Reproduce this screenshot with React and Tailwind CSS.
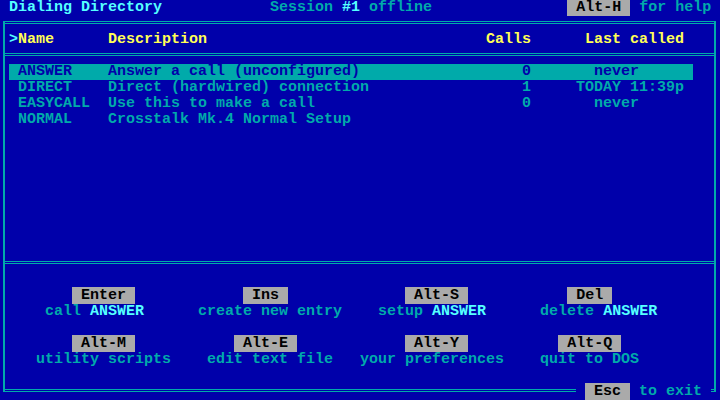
import React from "react";

const sp = (n) => " ".repeat(n);

function entry(name, desc, calls, last, lastCol) {
  let s = (" " + name).padEnd(11) + desc;
  if (calls !== "") {
    s = s.padEnd(57) + calls;
    s = s.padEnd(lastCol - 1) + last;
  }
  return s;
}

function Key({ children }) {
  return <span className="bg-[#AAAAAA] text-black">{children}</span>;
}

function Hi({ children }) {
  return <span className="text-[#55FFFF]">{children}</span>;
}

function Sep() {
  return (
    <div className="h-4 pt-[5px]">
      <div className="h-[3px] border-y border-[#00AAAA]" />
    </div>
  );
}

export default function App() {
  return (
    <div className="w-[720px] h-[400px] overflow-hidden bg-[#0000AA] text-[#00AAAA] font-['Liberation_Mono','DejaVu_Sans_Mono',monospace] text-[15px] leading-4 font-bold">
      {/* Title row */}
      <div className="h-4 whitespace-pre">
        <span className="text-[#55FFFF]">{" Dialing Directory"}</span>
        {sp(12)}
        {"Session "}
        <Hi>#1</Hi>
        {" offline"}
        {sp(15)}
        <Key> Alt-H </Key>
        {" for help"}
      </div>

      {/* Frame */}
      <div className="ml-[3px] mt-[5px] w-[713px] h-[371px] border-t border-x-2 border-[#00AAAA]">
        <div className="h-[2px] border-b border-[#00AAAA]" />
        <div className="h-[8px]" />

        {/* Header */}
        <div className="h-4 pl-[4px] whitespace-pre text-[#FFFF55]">
          <span className="text-[#55FFFF]">&gt;</span>
          {"Name" + sp(6) + "Description" + sp(31) + "Calls" + sp(6) + "Last called"}
        </div>

        <Sep />

        {/* Entries */}
        <div className="h-[192px] pl-[4px] whitespace-pre">
          <div className="h-4 w-[684px] bg-[#00AAAA] text-[#0000AA]">
            {entry("ANSWER", "Answer a call (unconfigured)", "0", "never", 66).padEnd(76)}
          </div>
          <div className="h-4">
            {entry("DIRECT", "Direct (hardwired) connection", "1", "TODAY 11:39p", 64)}
          </div>
          <div className="h-4">
            {entry("EASYCALL", "Use this to make a call", "0", "never", 66)}
          </div>
          <div className="h-4">
            {entry("NORMAL", "Crosstalk Mk.4 Normal Setup", "", "", 0)}
          </div>
        </div>

        <Sep />

        <div className="h-4" />

        {/* Key row 1 */}
        <div className="h-4 pl-[4px] whitespace-pre">
          {sp(7)}
          <Key> Enter </Key>
          {sp(12)}
          <Key> Ins </Key>
          {sp(13)}
          <Key> Alt-S </Key>
          {sp(11)}
          <Key> Del </Key>
        </div>
        <div className="h-4 pl-[4px] whitespace-pre">
          {sp(4) + "call "}
          <Hi>ANSWER</Hi>
          {sp(6) + "create new entry" + sp(4) + "setup "}
          <Hi>ANSWER</Hi>
          {sp(6) + "delete "}
          <Hi>ANSWER</Hi>
        </div>

        <div className="h-4" />

        {/* Key row 2 */}
        <div className="h-4 pl-[4px] whitespace-pre">
          {sp(7)}
          <Key> Alt-M </Key>
          {sp(11)}
          <Key> Alt-E </Key>
          {sp(12)}
          <Key> Alt-Y </Key>
          {sp(10)}
          <Key> Alt-Q </Key>
        </div>
        <div className="h-4 pl-[4px] whitespace-pre">
          {sp(3) + "utility scripts" + sp(4) + "edit text file" + sp(3) + "your preferences" + sp(4) + "quit to DOS"}
        </div>

        <div className="h-4" />

        {/* Bottom border row */}
        <div className="h-4 flex">
          <div className="w-[571px] pt-[5px]">
            <div className="h-[3px] border-y border-[#00AAAA]" />
          </div>
          <div className="w-[135px] pl-[9px] whitespace-pre">
            <Key> Esc </Key>
            {" to exit "}
          </div>
          <div className="flex-1 pt-[5px]">
            <div className="h-[3px] border-y border-[#00AAAA]" />
          </div>
        </div>
      </div>
    </div>
  );
}
